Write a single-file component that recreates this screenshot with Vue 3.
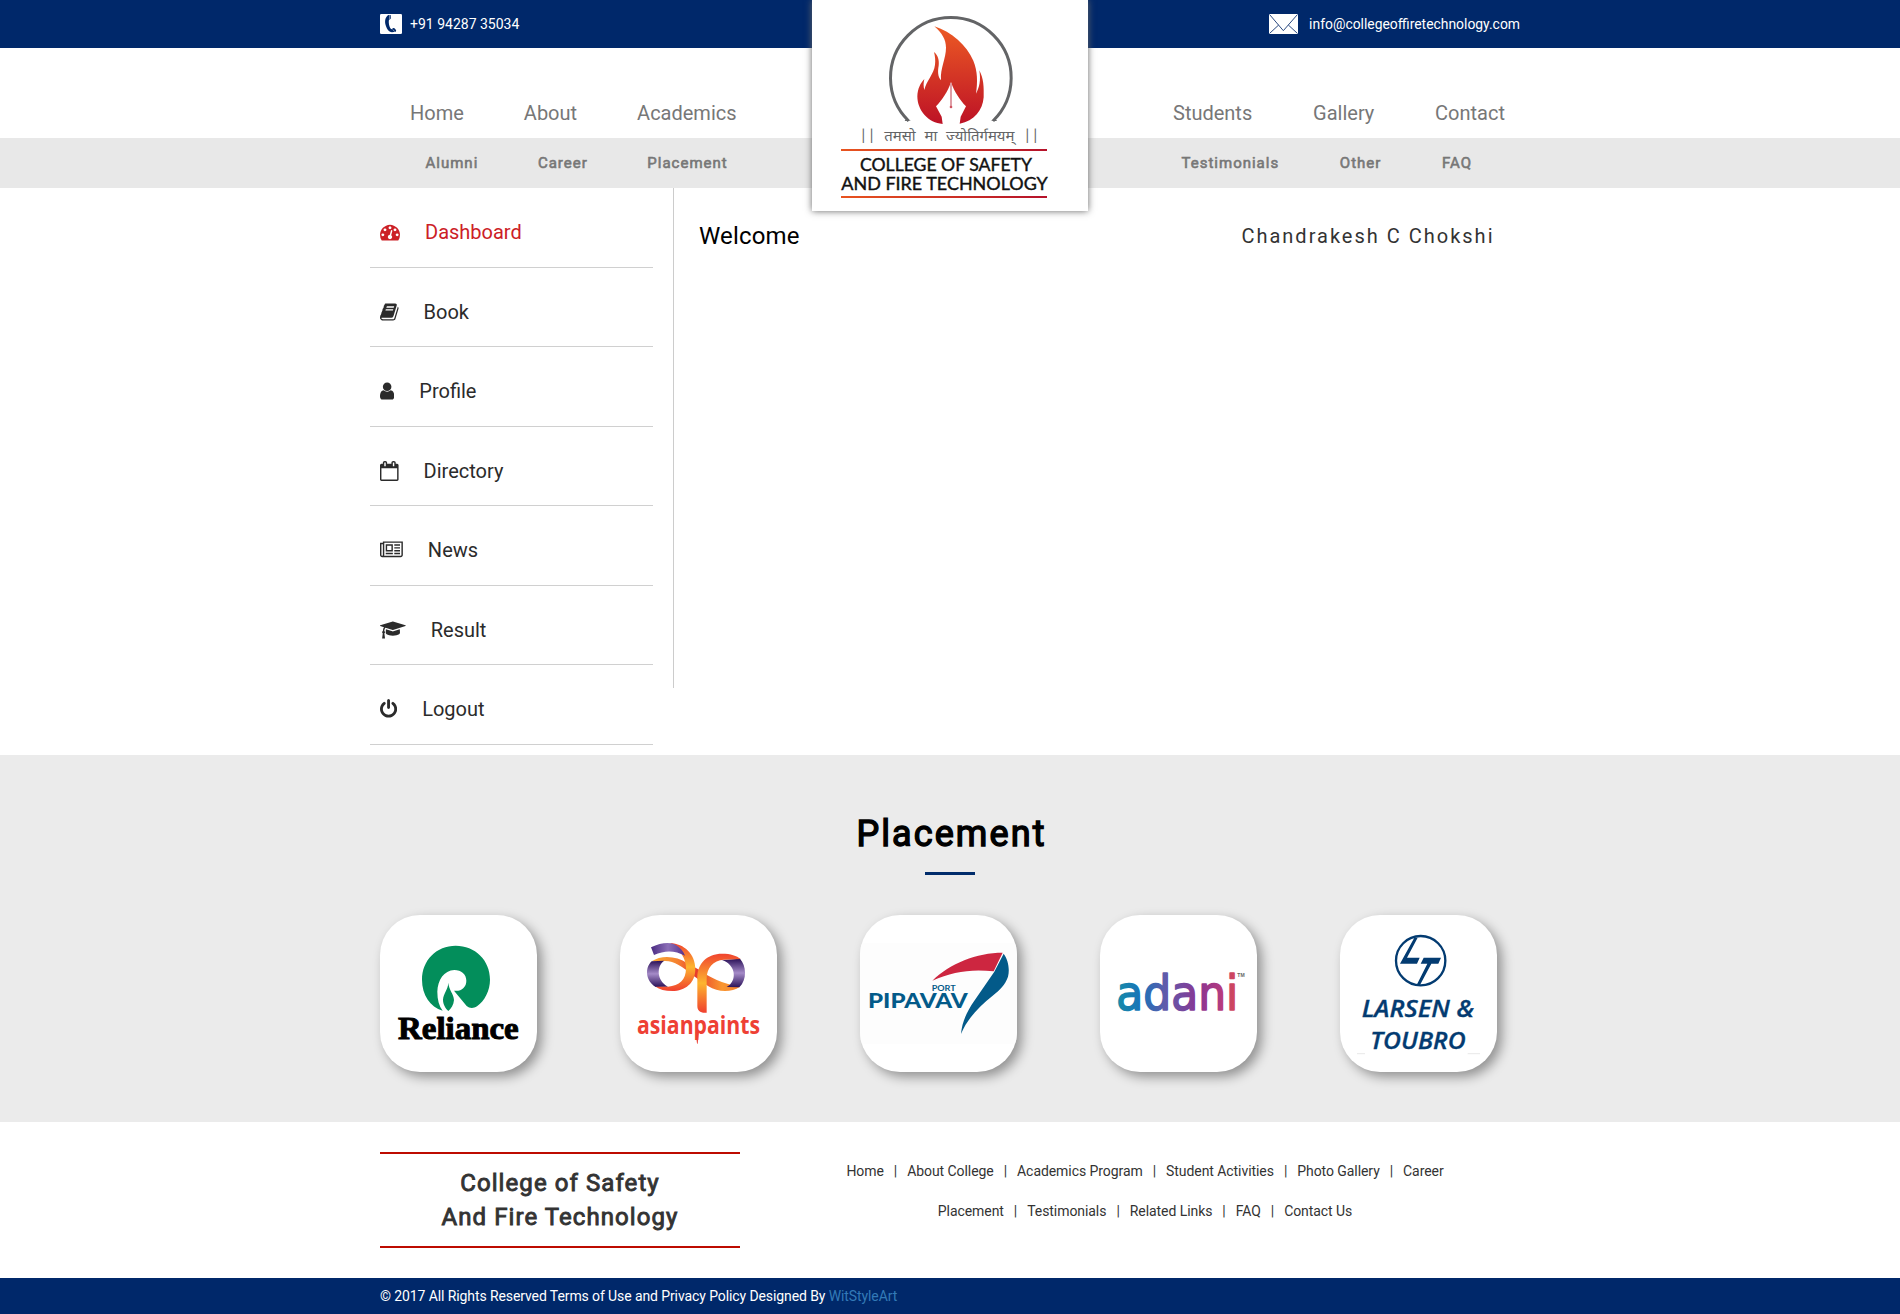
<script setup>
const leftMain = ['Home', 'About', 'Academics']
const rightMain = ['Students', 'Gallery', 'Contact']
const leftSub = ['Alumni', 'Career', 'Placement']
const rightSub = ['Testimonials', 'Other', 'FAQ']

const menu = [
  { label: 'Dashboard', box: '0 0 1792 1792', width: 20, active: true, path: 'M384 1152q0-53-37.5-90.5t-90.5-37.5-90.5 37.5-37.5 90.5 37.5 90.5 90.5 37.5 90.5-37.5 37.5-90.5zm192-448q0-53-37.5-90.5t-90.5-37.5-90.5 37.5-37.5 90.5 37.5 90.5 90.5 37.5 90.5-37.5 37.5-90.5zm428 481l101-382q6-26-7.5-48.5t-38.5-29.5-48 6.5-30 39.5l-101 382q-60 5-107 43.5t-63 98.5q-20 77 20 146t117 89 146-20 89-117q16-60-6-117t-72-91zm660-33q0-53-37.5-90.5t-90.5-37.5-90.5 37.5-37.5 90.5 37.5 90.5 90.5 37.5 90.5-37.5 37.5-90.5zm-640-640q0-53-37.5-90.5t-90.5-37.5-90.5 37.5-37.5 90.5 37.5 90.5 90.5 37.5 90.5-37.5 37.5-90.5zm448 192q0-53-37.5-90.5t-90.5-37.5-90.5 37.5-37.5 90.5 37.5 90.5 90.5 37.5 90.5-37.5 37.5-90.5zm320 448q0 261-141 483-19 29-54 29h-1402q-35 0-54-29-141-221-141-483 0-182 71-348t191-286 286-191 348-71 348 71 286 191 191 286 71 348z' },
  { label: 'Book', box: '64 0 1664 1792', width: 18.57, path: 'M1703 478q40 57 18 129l-275 906q-19 64-76.5 107.5t-122.5 43.5h-923q-77 0-148.5-53.5t-99.5-131.5q-24-67-2-127 0-4 3-27t4-37q1-8-3-21.5t-3-19.5q2-11 8-21t16.5-23.5 16.5-23.5q23-38 45-91.5t30-91.5q3-10 .5-30t-.5-28q3-11 17-28t17-23q21-36 42-92t25-90q1-9-2.5-32t.5-28q4-13 22-30.5t22-22.5q19-26 42.5-84.5t27.5-96.5q1-8-3-25.5t-2-26.5q2-8 9-18t18-23 17-21q8-12 16.5-30.5t15-35 16-36 19.5-32 26.5-23.5 36-11.5 47.5 5.5l-1 3q38-9 51-9h761q74 0 114 56t18 130l-274 906q-36 119-71.5 153.5t-128.5 34.5h-869q-27 0-38 15-11 16-1 43 24 70 144 70h923q29 0 56-15.5t35-41.5l300-987q7-22 5-57 38 15 59 43zm-1064 2q-4 13 2 22.5t20 9.5h608q13 0 25.5-9.5t16.5-22.5l21-64q4-13-2-22.5t-20-9.5h-608q-13 0-25.5 9.5t-16.5 22.5zm-83 256q-4 13 2 22.5t20 9.5h608q13 0 25.5-9.5t16.5-22.5l21-64q4-13-2-22.5t-20-9.5h-608q-13 0-25.5 9.5t-16.5 22.5z' },
  { label: 'Profile', box: '256 0 1280 1792', width: 14.29, path: 'M1536 1399q0 109-62.5 187t-150.5 78h-854q-88 0-150.5-78t-62.5-187q0-85 8.5-160.5t31.5-152 58.5-131 94-89 134.5-34.5q131 128 313 128t313-128q76 0 134.5 34.5t94 89 58.5 131 31.5 152 8.5 160.5zm-256-887q0 159-112.5 271.5t-271.5 112.5-271.5-112.5-112.5-271.5 112.5-271.5 271.5-112.5 271.5 112.5 112.5 271.5z' },
  { label: 'Directory', box: '64 0 1664 1792', width: 18.57, path: 'M192 1664h1408v-1024h-1408v1024zm384-1216v-288q0-14-9-23t-23-9h-64q-14 0-23 9t-9 23v288q0 14 9 23t23 9h64q14 0 23-9t9-23zm768 0v-288q0-14-9-23t-23-9h-64q-14 0-23 9t-9 23v288q0 14 9 23t23 9h64q14 0 23-9t9-23zm384-64v1280q0 52-38 90t-90 38h-1408q-52 0-90-38t-38-90v-1280q0-52 38-90t90-38h128v-96q0-66 47-113t113-47h64q66 0 113 47t47 113v96h384v-96q0-66 47-113t113-47h64q66 0 113 47t47 113v96h128q52 0 90 38t38 90z' },
  { label: 'News', box: '0 0 2048 1792', width: 22.86, path: 'M1024 512h-384v384h384v-384zm128 640v128h-640v-128h640zm0-768v640h-640v-640h640zm640 768v128h-512v-128h512zm0-256v128h-512v-128h512zm0-256v128h-512v-128h512zm0-256v128h-512v-128h512zm-1536 960v-960h-128v960q0 26 19 45t45 19 45-19 19-45zm1664 0v-1088h-1536v1088q0 33-11 64h1483q26 0 45-19t19-45zm128-1216v1216q0 80-56 136t-136 56h-1664q-80 0-136-56t-56-136v-1088h256v-128h1792z' },
  { label: 'Result', box: '0 0 2304 1792', width: 25.71, path: 'M1774 836l18 316q4 69-82 128t-235 93.5-323 34.5-323-34.5-235-93.5-82-128l18-316 574 181q22 7 48 7t48-7zm530-324q0 23-22 31l-1120 352q-4 1-10 1t-10-1l-652-206q-43 34-71 111.5t-34 178.5q63 36 63 109 0 69-58 107l58 433q2 14-8 25-9 11-24 11h-192q-15 0-24-11-10-11-8-25l58-433q-58-38-58-107 0-73 65-111 11-207 98-330l-333-104q-22-8-22-31t22-31l1120-352q4-1 10-1t10 1l1120 352q22 8 22 31z' },
  { label: 'Logout', box: '128 0 1536 1792', width: 17.14, path: 'M1664 896q0 156-61 298t-164 245-245 164-298 61-298-61-245-164-164-245-61-298q0-182 80.5-343t226.5-270q43-32 95.5-25t83.5 50q32 42 24.5 94.5t-49.5 84.5q-98 74-151.5 181t-53.5 228q0 104 40.5 198.5t109.5 163.5 163.5 109.5 198.5 40.5 198.5-40.5 163.5-109.5 109.5-163.5 40.5-198.5q0-121-53.5-228t-151.5-181q-42-32-49.5-84.5t24.5-94.5q31-43 84-50t95 25q146 109 226.5 270t80.5 343zm-640-768v640q0 52-38 90t-90 38-90-38-38-90v-640q0-52 38-90t90-38 90 38 38 90z' }
]

const footerRows = [
  ['Home', 'About College', 'Academics Program', 'Student Activities', 'Photo Gallery', 'Career'],
  ['Placement', 'Testimonials', 'Related Links', 'FAQ', 'Contact Us']
]
</script>

<template>
  <div class="page">
    <header>
      <div class="topbar">
        <div class="container topbar-inner">
          <div class="contact">
            <svg class="phone" width="22" height="20" viewBox="0 0 66 60">
              <rect width="66" height="60" rx="4" fill="#fff" />
              <path d="M26 3C17 7 14 18 16 30C19 43 26 54 36 55L47 53C50 51 48 48 46 46C43 41 39 41 37 44L34 46C28 40 25 26 27 17L30 16C33 15 33 12 32 3Z" fill="#00286a" />
              <path d="M29 3V15M38 46L44 53" stroke="#fff" stroke-width="1.5" />
            </svg>
            <span>+91 94287 35034</span>
          </div>
          <div class="contact mail">
            <svg width="29" height="20" viewBox="0 0 87 60">
              <rect width="87" height="60" rx="3" fill="#fff" />
              <path d="M2 2L43 50L85 2M2 58L29 33M85 58L58 33" fill="none" stroke="#2b4a80" stroke-width="3" />
            </svg>
            <span>info@collegeoffiretechnology.com</span>
          </div>
        </div>
      </div>
      <div class="mainbar">
        <div class="container nav main-nav">
          <nav class="left"><a v-for="n in leftMain" :key="n">{{ n }}</a></nav>
          <nav class="right"><a v-for="n in rightMain" :key="n">{{ n }}</a></nav>
        </div>
      </div>
      <div class="subbar">
        <div class="container nav sub-nav">
          <nav class="left"><a v-for="n in leftSub" :key="n">{{ n }}</a></nav>
          <nav class="right"><a v-for="n in rightSub" :key="n">{{ n }}</a></nav>
        </div>
      </div>
      <div class="logo">
        <svg width="276" height="211" viewBox="36 0 828 633">
          <defs>
            <linearGradient id="flame" x1="0" y1="0" x2="0" y2="1">
              <stop offset="0" stop-color="#ec5a24" />
              <stop offset="1" stop-color="#bd1226" />
            </linearGradient>
            <linearGradient id="rule" gradientUnits="userSpaceOnUse" x1="123" y1="0" x2="741" y2="0">
              <stop offset="0" stop-color="#e8541f" />
              <stop offset="1" stop-color="#b5122b" />
            </linearGradient>
          </defs>
          <path d="M326 363A181 181 0 1 1 579 363" fill="none" stroke="#636466" stroke-width="9" />
          <path d="M318 357L333 363H314ZM587 357L572 363H591Z" fill="#636466" />
          <path fill="url(#flame)" d="M403 79C455 96 500 136 520 182C533 213 533 246 528 281C538 262 543 242 538 211C551 236 552 262 551 292C548 330 523 364 479 371L482 350L498 319C480 300 463 276 453 246C443 276 426 300 408 319L425 350L428 372C385 369 352 331 352 289C353 266 361 250 373 237C370 249 370 259 373 270C378 244 402 222 405 194C407 181 405 168 402 156C414 165 418 181 416 197C413 213 413 229 423 241C420 205 438 176 438 143C438 119 426 99 403 79Z" />
          <path d="M453 250V320" stroke="#d98a94" stroke-width="5" />
          <circle cx="453" cy="321" r="4" fill="#cf5562" />
          <text class="motto" x="178" y="424" textLength="540" lengthAdjust="spacingAndGlyphs">|| तमसो मा ज्योतिर्गमयम् ||</text>
          <path d="M123 447H741V453H123ZM123 588H741V594H123Z" fill="url(#rule)" />
          <text class="brand" x="180" y="513" textLength="516" lengthAdjust="spacingAndGlyphs">COLLEGE OF SAFETY</text>
          <text class="brand" x="124" y="571" textLength="619" lengthAdjust="spacingAndGlyphs">AND FIRE TECHNOLOGY</text>
        </svg>
      </div>
    </header>

    <main class="container content">
      <aside>
        <ul>
          <li v-for="m in menu" :key="m.label" :class="{ active: m.active }">
            <svg :viewBox="m.box" :width="m.width" height="20"><path :d="m.path" fill="currentColor" /></svg>
            <span>{{ m.label }}</span>
          </li>
        </ul>
      </aside>
      <section class="welcome">
        <h1>Welcome</h1>
        <p>Chandrakesh C Chokshi</p>
      </section>
    </main>

    <section class="placement">
      <h2>Placement</h2>
      <div class="underline"></div>
      <div class="container cards">
        <div class="card">
          <svg viewBox="30 45 471 471">
            <path fill="#038e5b" d="M218 332C180 320 156 285 156 239C156 180 200 137 257 137C315 137 360 180 360 239C360 272 344 302 321 319C310 326 298 325 290 318L252 272C274 275 289 262 289 242C289 223 274 210 253 210C222 211 203 240 202 275C202 299 207 318 218 332Z" />
            <path fill="#038e5b" d="M235 248C237 271 251 281 252 300C251 315 243 326 235 333C227 326 219 313 219 299C220 280 234 269 235 248Z" />
            <text class="reliance" x="84" y="417" textLength="362" lengthAdjust="spacingAndGlyphs">Reliance</text>
          </svg>
        </div>
        <div class="card">
          <svg viewBox="30 45 471 471">
            <defs>
              <linearGradient id="violet" x1="0" y1="0" x2="0" y2="1">
                <stop offset="0" stop-color="#2a1158" /><stop offset=".5" stop-color="#a58bc8" /><stop offset="1" stop-color="#2a1158" />
              </linearGradient>
              <linearGradient id="violetTop" x1="0" y1="0" x2="1" y2="0">
                <stop offset="0" stop-color="#4a2b82" /><stop offset=".5" stop-color="#8c6fb8" /><stop offset="1" stop-color="#54318c" />
              </linearGradient>
              <linearGradient id="amber" x1="0" y1="0" x2="0" y2="1">
                <stop offset="0" stop-color="#f0442f" /><stop offset=".5" stop-color="#fdb52f" /><stop offset="1" stop-color="#f0402f" />
              </linearGradient>
              <linearGradient id="ribbon" x1="0" y1="0" x2="1" y2="0">
                <stop offset="0" stop-color="#fbab33" /><stop offset=".3" stop-color="#f58030" /><stop offset=".5" stop-color="#e83a2c" /><stop offset=".8" stop-color="#f9962f" /><stop offset="1" stop-color="#f58030" />
              </linearGradient>
            </defs>
            <path fill="url(#ribbon)" d="M125 184C155 164 200 168 232 190L270 211C300 233 335 250 389 261C366 276 326 279 294 258L250 227C215 198 190 181 162 183Z" />
            <path fill="url(#violet)" d="M125 184L163 182C139 197 139 242 174 260L137 261C106 243 104 203 125 184Z" />
            <path fill="url(#amber)" d="M180 129C223 131 256 163 256 207C256 250 225 273 187 273C165 273 148 268 137 260L174 260C208 258 228 240 228 205C228 177 211 147 180 129Z" />
            <path fill="url(#violetTop)" d="M123 142C149 129 175 126 191 132C209 140 220 153 225 167C195 151 165 150 132 165Z" />
            <path fill="url(#violet)" d="M336 180L390 176C409 197 412 238 388 262L350 261C382 244 379 194 336 180Z" />
            <path fill="url(#amber)" d="M262 318V232C262 190 292 161 336 161C362 161 380 167 392 177L342 179C309 181 290 204 290 236V338C272 340 262 333 262 318Z" />
            <path fill="#ee4034" d="M257 395H267L263 431H261Z" />
            <text class="asian" x="81" y="401" textLength="369" lengthAdjust="spacingAndGlyphs">asianpaints</text>
          </svg>
        </div>
        <div class="card">
          <svg viewBox="30 45 471 471">
            <rect x="30" y="129" width="471" height="303" fill="#fdfdfd" />
            <path fill="#cd2640" d="M247 242C300 190 380 158 458 158L431 214C360 206 308 216 247 242Z" />
            <path fill="#035a89" d="M461 161C474 178 480 207 474 230C466 253 450 270 428 287C385 320 350 360 333 402C336 367 350 335 373 302L433 215Z" />
            <text class="port" x="245" y="273" textLength="72" lengthAdjust="spacingAndGlyphs">PORT</text>
            <text class="pipavav" x="54" y="325" textLength="299" lengthAdjust="spacingAndGlyphs">PIPAVAV</text>
          </svg>
        </div>
        <div class="card">
          <svg viewBox="30 45 471 471">
            <defs>
              <linearGradient id="adani" gradientUnits="userSpaceOnUse" x1="84" y1="0" x2="436" y2="0">
                <stop offset="0" stop-color="#178aa9" /><stop offset=".2" stop-color="#1972b9" /><stop offset=".4" stop-color="#5f5bab" /><stop offset=".7" stop-color="#8c3592" /><stop offset=".9" stop-color="#b93c7c" /><stop offset="1" stop-color="#d34857" />
              </linearGradient>
            </defs>
            <text class="adani" x="79" y="330" textLength="366" lengthAdjust="spacingAndGlyphs">adani</text>
            <text class="tm" x="442" y="231" textLength="22" lengthAdjust="spacingAndGlyphs">TM</text>
          </svg>
        </div>
        <div class="card">
          <svg viewBox="30 45 471 471">
            <circle cx="272" cy="182" r="74" fill="none" stroke="#033b71" stroke-width="7" />
            <path fill="#033b71" d="M253 113H263L231 173H269L261 191H210ZM281 173H333L325 191H304L270 255H260L292 191H272Z" />
            <text class="larsen" x="95" y="350" textLength="337" lengthAdjust="spacingAndGlyphs">LARSEN &amp;</text>
            <text class="larsen" x="121" y="446" textLength="286" lengthAdjust="spacingAndGlyphs">TOUBRO</text>
            <path d="M81 461H105M413 461H450" stroke="#ddd" stroke-width="2" />
          </svg>
        </div>
      </div>
    </section>

    <footer>
      <div class="container footer-main">
        <div class="footer-title">College of Safety<br />And Fire Technology</div>
        <div class="footer-links">
          <div v-for="(row, r) in footerRows" :key="r" class="link-row">
            <template v-for="(l, i) in row" :key="l"><i v-if="i">|</i><a>{{ l }}</a></template>
          </div>
        </div>
      </div>
      <div class="copyright">
        <div class="container">© 2017 All Rights Reserved Terms of Use and Privacy Policy Designed By <a>WitStyleArt</a></div>
      </div>
    </footer>
  </div>
</template>

<style>
body { margin: 0; background: #fff; }
</style>

<style scoped>
* { box-sizing: border-box; }
.page { font-family: Roboto, sans-serif; font-size: 14px; line-height: 20px; color: #333; height: 1314px; overflow: hidden; }
.container { width: 1140px; margin: 0 auto; }
svg { display: block; flex: none; }
h1, h2, p, ul { margin: 0; padding: 0; font-weight: 400; }
header { position: relative; }
.topbar { background: #00286a; height: 48px; color: #fff; }
.topbar-inner { display: flex; justify-content: space-between; padding-top: 14px; }
.contact { display: flex; gap: 8px; }
.contact.mail { gap: 11px; font-size: 13.9px; }
.mainbar { height: 90px; }
.nav { display: flex; color: #777; }
.nav nav { display: flex; gap: 60px; }
.main-nav { font-size: 20px; line-height: 28px; padding-top: 51px; }
.main-nav .left { margin-left: 30px; width: 763px; }
.main-nav .right { gap: 60.8px; }
.subbar { height: 50px; background: #e8e8e8; }
.sub-nav { font-size: 15px; line-height: 22px; letter-spacing: 1px; padding-top: 14px; -webkit-text-stroke: .6px #777; }
.sub-nav .left { margin-left: 45.5px; width: 756px; gap: 59.6px; }
.sub-nav .right { gap: 60.7px; }
.logo { position: absolute; left: 812px; top: 0; width: 276px; height: 211px; background: #fff; box-shadow: 0 0 7px #666; }
.motto { font: 42px "Noto Sans Devanagari", "Noto Sans", sans-serif; word-spacing: 14px; fill: #636466; }
.brand { font: 400 53px Lato, sans-serif; fill: #111; stroke: #111; stroke-width: 1.2px; }
.content { height: 567px; display: flex; }
aside { width: 294px; height: 500px; border-right: 1px solid #ccc; }
aside ul { list-style: none; width: 283px; margin-left: -10px; }
aside li { height: 79.5px; padding: 30px 0 0 10px; border-bottom: 1px solid #d0d0d0; display: flex; gap: 25px; font-size: 20px; line-height: 28.5px; color: #2b2b2b; }
aside li svg { margin-top: 4px; }
aside li.active { color: #cc2026; }
.welcome { flex: 1; display: flex; justify-content: space-between; padding: 31px 25.5px 0 25px; }
.welcome h1 { font-size: 24px; line-height: 34px; letter-spacing: .15px; color: #000; }
.welcome p { font-size: 20px; line-height: 34px; letter-spacing: 2px; }
.placement { background: #ebebeb; height: 367px; padding-top: 54px; }
.placement h2 { font-size: 36px; line-height: 50px; letter-spacing: 2.1px; padding-left: 3px; color: #000; text-align: center; -webkit-text-stroke: 1.4px #000; }
.underline { width: 50px; height: 3px; background: #002c6b; margin: 13px auto 40px; }
.cards { display: flex; gap: 83px; }
.card { width: 157px; height: 157px; border-radius: 40px; background: #fff; overflow: hidden; box-shadow: 5px 5px 12px rgba(0, 0, 0, .38); flex: none; }
.card svg { width: 157px; height: 157px; }
.reliance { font: 700 97px "Liberation Serif", serif; fill: #000; stroke: #000; stroke-width: 3px; }
.asian { font: 700 77px "Open Sans", sans-serif; fill: #ee4034; }
.port { font: 700 25px Lato, sans-serif; fill: #035a89; }
.pipavav { font: 900 63px Lato, sans-serif; fill: #035a89; }
.adani { font: 400 146px "DejaVu Sans", sans-serif; fill: url(#adani); stroke: url(#adani); stroke-width: 5px; stroke-linejoin: round; }
.tm { font: 700 14px "Liberation Sans", sans-serif; fill: #666; }
.larsen { font: italic 600 71px "Open Sans", sans-serif; fill: #033b71; stroke: #033b71; stroke-width: 1px; }
.footer-main { height: 156px; display: flex; gap: 30px; padding-top: 30px; }
.footer-title { width: 360px; height: 96px; border-top: 2px solid #bd0b00; border-bottom: 2px solid #bd0b00; text-align: center; font-size: 24px; line-height: 34.3px; letter-spacing: 1.08px; padding-top: 12px; -webkit-text-stroke: .9px #333; }
.footer-links { flex: 1; padding-top: 9px; }
.link-row { display: flex; justify-content: center; height: 40px; letter-spacing: -.065px; }
.link-row i { font-style: normal; margin: 0 10px; }
.copyright { background: #00286a; height: 36px; color: #fff; padding-top: 8px; letter-spacing: -.098px; }
.copyright a { color: #337ab7; }
</style>
